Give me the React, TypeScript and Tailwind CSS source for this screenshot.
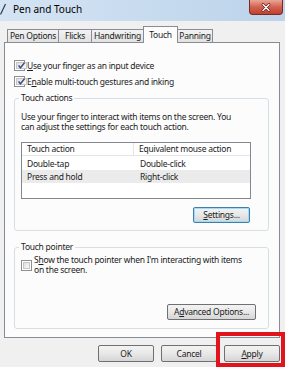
import type { ReactNode } from 'react';

function CheckBox({ checked }: { checked: boolean }) {
  return (
    <span className="flex h-[11px] w-[11px] shrink-0 border border-[#8e8f8f] bg-white p-px">
      <span className="flex flex-1 items-center justify-center border border-[#c6c6c6] bg-gradient-to-br from-[#dedede] to-[#fafafa]">
        {checked && (
          <svg width="9" height="9" viewBox="0 0 9 9">
            <path d="M1.5 4.6 L3.5 6.8 L7.6 1.6" fill="none" stroke="#3b4e86" strokeWidth="1.5" />
          </svg>
        )}
      </span>
    </span>
  );
}

function Button({
  children,
  className = '',
  focused = false,
}: {
  children: ReactNode;
  className?: string;
  focused?: boolean;
}) {
  return (
    <div
      className={`flex shrink-0 items-center justify-center whitespace-nowrap rounded-[2px] border bg-gradient-to-b from-[#f3f3f3] via-[#e8e8e8] to-[#d5d5d5] ${
        focused ? 'border-[#3c7fb1] shadow-[inset_0_0_0_1px_#9fdcf5]' : 'border-[#707070]'
      } ${className}`}
    >
      {children}
    </div>
  );
}

function Tab({ label, width, active = false }: { label: string; width: string; active?: boolean }) {
  if (active) {
    return (
      <div
        className={`relative z-10 -mb-px -ml-px flex h-[17px] items-start justify-center whitespace-nowrap border border-b-0 border-[#898c95] bg-[#fcfcfc] pt-[2px] ${width}`}
      >
        {label}
      </div>
    );
  }
  return (
    <div
      className={`-ml-px flex h-[13px] items-center justify-center whitespace-nowrap border border-b-0 border-[#898c95] bg-gradient-to-b from-[#f3f3f3] to-[#e1e1e1] first:ml-0 ${width}`}
    >
      {label}
    </div>
  );
}

function Group({ title, children, className = '' }: { title: string; children: ReactNode; className?: string }) {
  return (
    <div className={`flex w-[255px] flex-col rounded-[3px] border border-[#d5dfe5] pl-[6px] ${className}`}>
      <div className="-ml-[2px] -mt-[7px] h-[12px] w-fit bg-[#fcfcfc] px-[2px] leading-[12px] text-[#222]">
        {title}
      </div>
      {children}
    </div>
  );
}

export default function App() {
  return (
    <div className="relative h-[367px] w-[285px] overflow-hidden bg-[#f0f0f0] font-['Noto_Sans','Open_Sans',sans-serif] text-[8.5px] leading-[12px] tracking-[-0.25px] text-[#1b1b1b]">
      {/* title bar */}
      <div className="flex h-[21px] items-start bg-gradient-to-r from-[#d4e4f4] to-[#bcd3ea]">
        <svg width="8" height="16" viewBox="0 0 8 16" className="mt-[1px] shrink-0">
          <path d="M0.5 13.5 L5.5 3" stroke="#2b3a4a" strokeWidth="1.2" />
        </svg>
        <span className="ml-[5px] mt-[3px] text-[10px] leading-[13px] tracking-normal text-black">Pen and Touch</span>
        <div className="ml-auto mr-[2px] flex h-[15px] w-[34px] items-center justify-center rounded-b-[4px] border border-t-0 border-[#7a2a24] bg-gradient-to-b from-[#e9a597] via-[#d2614f] to-[#c13f2d]">
          <svg width="10" height="9" viewBox="0 0 10 9">
            <path d="M2 1.5 L8 7.5 M8 1.5 L2 7.5" stroke="#5a1a14" strokeWidth="2.6" strokeLinecap="round" />
            <path d="M2 1.5 L8 7.5 M8 1.5 L2 7.5" stroke="#ffffff" strokeWidth="1.4" strokeLinecap="round" />
          </svg>
        </div>
      </div>

      {/* tabs */}
      <div className="mt-[5px] flex h-[16px] items-end pl-[7px]">
        <Tab label="Pen Options" width="w-[52px]" />
        <Tab label="Flicks" width="w-[34px]" />
        <Tab label="Handwriting" width="w-[53px]" />
        <Tab label="Touch" width="w-[35px]" active />
        <Tab label="Panning" width="w-[36px]" />
      </div>

      {/* tab panel */}
      <div className="ml-[4px] flex h-[296px] w-[276px] flex-col border border-[#898c95] bg-[#fcfcfc] pl-[9px] pt-[16px]">
        <div className="flex h-[13px] items-center gap-[2px]">
          <CheckBox checked />
          <span>
            <span className="underline">U</span>se your finger as an input device
          </span>
        </div>
        <div className="mt-[3px] flex h-[13px] items-center gap-[2px]">
          <CheckBox checked />
          <span>
            E<span className="underline">n</span>able multi-touch gestures and inking
          </span>
        </div>

        <Group title="Touch actions" className="mt-[10px] pb-[7px]">
          <div className="mt-[8px] leading-[10px]">
            Use your finger to interact with items on the screen. You
            <br />
            can adjust the settings for each touch action.
          </div>
          <div className="flex w-[230px] flex-col items-end">
            <div className="mt-[10px] flex h-[57px] w-full flex-col border border-[#828790] bg-white">
              <div className="flex h-[13px] border-b border-[#e5e5e5]">
                <div className="w-[112px] border-r border-[#e5e5e5] pl-[5px]">Touch action</div>
                <div className="pl-[5px]">Equivalent mouse action</div>
              </div>
              <div className="mt-px flex h-[13px] items-center">
                <div className="w-[112px] pl-[5px]">Double-tap</div>
                <div className="pl-[6px]">Double-click</div>
              </div>
              <div className="flex h-[13px] items-center bg-[#ebebeb]">
                <div className="w-[112px] pl-[5px]">Press and hold</div>
                <div className="pl-[6px]">Right-click</div>
              </div>
            </div>
            <Button focused className="mr-px mt-[8px] h-[16px] w-[57px]">
              <span>
                <span className="underline">S</span>ettings...
              </span>
            </Button>
          </div>
        </Group>

        <Group title="Touch pointer" className="mt-[16px] pb-[8px]">
          <div className="mt-[2px] flex items-center gap-[2px]">
            <CheckBox checked={false} />
            <span className="whitespace-nowrap leading-[10px]">
              S<span className="underline">h</span>ow the touch pointer when I'm interacting with items
              <br />
              on the screen.
            </span>
          </div>
          <Button className="mr-[12px] mt-[29px] h-[16px] w-[89px] self-end">
            <span>
              A<span className="underline">d</span>vanced Options...
            </span>
          </Button>
        </Group>
      </div>

      {/* dialog buttons */}
      <div className="mt-[7px] flex justify-end gap-[7px] pr-[5px]">
        <Button className="h-[17px] w-[56px]">OK</Button>
        <Button className="h-[17px] w-[56px]">Cancel</Button>
        <Button className="h-[17px] w-[56px]">
          <span>
            <span className="underline">A</span>pply
          </span>
        </Button>
      </div>

      {/* highlight annotation */}
      <div className="absolute left-[216px] top-[332px] h-[35px] w-[69px] border-[4px] border-[#e1141e]" />
    </div>
  );
}
